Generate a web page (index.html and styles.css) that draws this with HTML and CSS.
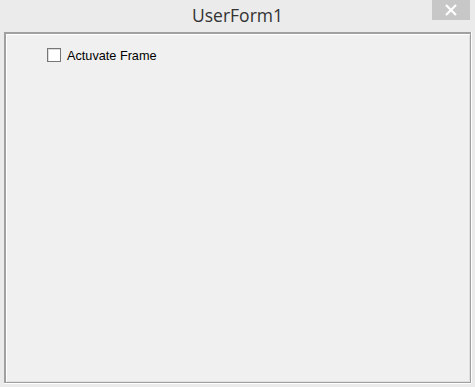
FILE: index.html
```html
<!DOCTYPE html>
<html>
<head>
<meta charset="utf-8">
<link rel="stylesheet" href="styles.css">
</head>
<body>
<div class="window">
  <div class="titlebar">
    <span class="spacer"></span>
    <span class="title">UserForm1</span>
    <span class="close"><svg width="14" height="12" viewBox="0 0 14 12"><path d="M2 1 L12 11 M12 1 L2 11" stroke="#fff" stroke-width="2.2"/></svg></span>
  </div>
  <div class="client">
    <label class="check"><span class="box"></span><span class="label">Actuvate Frame</span></label>
  </div>
</div>
</body>
</html>
```
FILE: styles.css
```css
html, body { margin: 0; padding: 0; }
body { width: 475px; height: 387px; background: #ebebeb; overflow: hidden; }
.window { display: flex; flex-direction: column; height: 387px; }
.titlebar {
  height: 32px;
  display: grid;
  grid-template-columns: 1fr auto 1fr;
  align-items: start;
  background: #ebebeb;
}
.title {
  font-family: "Open Sans", sans-serif;
  font-size: 17.5px;
  color: #333;
  padding-top: 3px;
  line-height: 24px;
}
.close {
  justify-self: end;
  margin-right: 5px;
  width: 38px;
  height: 20px;
  background: #c7c7c7;
  display: flex;
  align-items: center;
  justify-content: center;
}
.client {
  flex: 1;
  margin: 0 4px 4px 4px;
  background: #f0f0f0;
  border-top: 2px solid #a0a0a0;
  border-left: 2px solid #a0a0a0;
  border-right: 1px solid #a0a0a0;
  border-bottom: 1px solid #a0a0a0;
  box-shadow: inset 1px 1px 0 #fff, inset -1px -1px 0 #e0e0e0, 0 1px 0 #fff, 1px 0 0 #fff;
  padding: 13px 0 0 41px;
}
.check { display: flex; align-items: center; gap: 6px; }
.box {
  width: 12px; height: 12px;
  border: 1px solid #777;
  background: #fff;
  box-shadow: inset 1px 1px 0 #ddd;
}
.label {
  font-family: "Liberation Sans", sans-serif;
  font-size: 12.7px;
  color: #000;
  padding-top: 2px;
}
```
